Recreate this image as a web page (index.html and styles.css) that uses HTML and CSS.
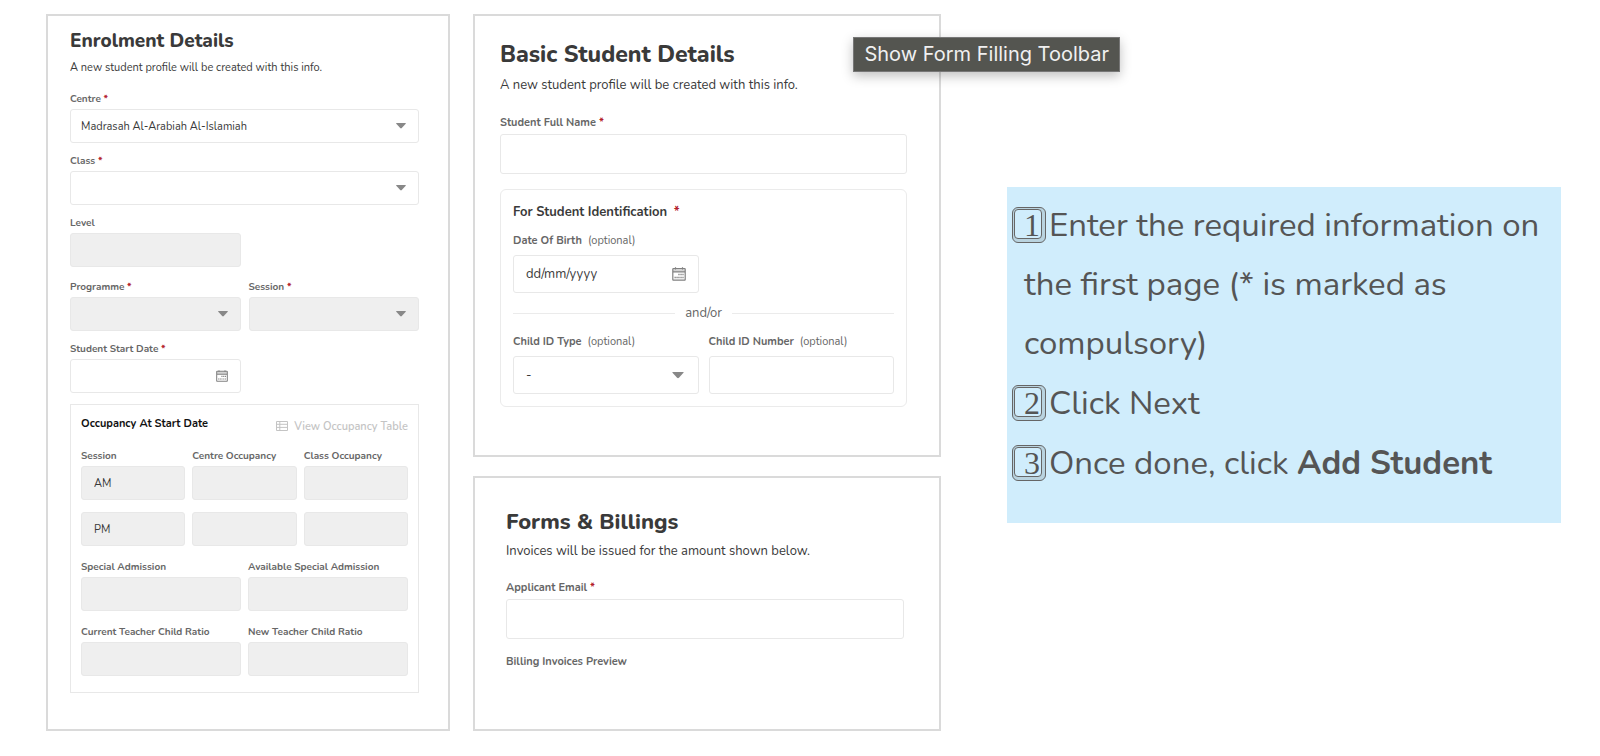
FILE: index.html
```html
<!DOCTYPE html>
<html lang="en">
<head>
  <meta charset="UTF-8" />
  <meta name="viewport" content="width=device-width, initial-scale=1.0"/>
  <title>Add Student</title>
  <link rel="stylesheet" href="styles.css">
</head>
<body>

<!-- shared icons -->
<svg class="sprite" aria-hidden="true">
  <symbol id="calendar" viewBox="0 0 14 14">
    <path d="M1 1.500h12v3.300H1z" fill="currentColor" opacity=".35"/>
    <path d="M1.500 1.500h11a.7.7 0 0 1 .7.7v10.400a.6.6 0 0 1-.6.6H1.400a.6.6 0 0 1-.6-.6V2.200a.7.7 0 0 1 .7-.7zM.8 4.900h12.400M3.500.2v2.200M10.500.2v2.200" fill="none" stroke="currentColor" stroke-width="1.200"/>
    <path d="M6.300 6.800h1.300v1.400H6.300zM8.400 6.800h1.300v1.400H8.400zM10.400 6.800h1.200v1.400h-1.200zM2.500 9.800h1.300v1.400H2.500zM4.400 9.800h1.300v1.400H4.400zM6.300 9.800h1.300v1.400H6.300zM8.400 9.800h1.300v1.400H8.400zM10.400 9.800h1.200v1.400h-1.200z" fill="currentColor"/>
  </symbol>
  <symbol id="table" viewBox="0 0 12 10">
    <path d="M.5.5h11v9H.5zM.5 3.300h11M.5 6.400h11M3.800.5v9" fill="none" stroke="currentColor"/>
  </symbol>
</svg>

<main class="page">
  <section class="card enrolment">
    <h2>Enrolment Details</h2>
    <p class="intro">A new student profile will be created with this info.</p>

    <div class="field">
      <label for="centre">Centre <span class="req">*</span></label>
      <select id="centre"><option>Madrasah Al-Arabiah Al-Islamiah</option></select>
    </div>
    <div class="field">
      <label for="class">Class <span class="req">*</span></label>
      <select id="class"><option></option></select>
    </div>
    <div class="row spaced">
      <div class="field">
        <label for="level">Level</label>
        <input type="text" id="level" disabled>
      </div>
    </div>
    <div class="row">
      <div class="field">
        <label for="programme">Programme <span class="req">*</span></label>
        <select id="programme" disabled><option></option></select>
      </div>
      <div class="field">
        <label for="session">Session <span class="req">*</span></label>
        <select id="session" disabled><option></option></select>
      </div>
    </div>
    <div class="row">
      <div class="field">
        <label for="startDate">Student Start Date <span class="req">*</span></label>
        <div class="date">
          <input type="text" id="startDate">
          <button type="button" aria-label="Pick a date"><svg><use href="#calendar"/></svg></button>
        </div>
      </div>
    </div>

    <div class="occupancy">
      <div class="occupancy-head">
        <h3>Occupancy At Start Date</h3>
        <button type="button" class="view-table" disabled><svg><use href="#table"/></svg>View Occupancy Table</button>
      </div>
      <div class="thirds">
        <div class="field">
          <label for="am">Session</label>
          <input type="text" id="am" value="AM" disabled>
        </div>
        <div class="field">
          <label for="amCentre">Centre Occupancy</label>
          <input type="text" id="amCentre" disabled>
        </div>
        <div class="field">
          <label for="amClass">Class Occupancy</label>
          <input type="text" id="amClass" disabled>
        </div>
        <input type="text" value="PM" aria-label="Session" disabled>
        <input type="text" aria-label="Centre Occupancy" disabled>
        <input type="text" aria-label="Class Occupancy" disabled>
      </div>
      <div class="halves">
        <div class="field">
          <label for="special">Special Admission</label>
          <input type="text" id="special" disabled>
        </div>
        <div class="field">
          <label for="available">Available Special Admission</label>
          <input type="text" id="available" disabled>
        </div>
        <div class="field">
          <label for="ratio">Current Teacher Child Ratio</label>
          <input type="text" id="ratio" disabled>
        </div>
        <div class="field">
          <label for="newRatio">New Teacher Child Ratio</label>
          <input type="text" id="newRatio" disabled>
        </div>
      </div>
    </div>
  </section>

  <div class="column">
    <section class="card student">
      <h2>Basic Student Details</h2>
      <p class="intro">A new student profile will be created with this info.</p>
      <div class="field">
        <label for="fullName">Student Full Name <span class="req">*</span></label>
        <input type="text" id="fullName">
      </div>

      <div class="identification">
        <h3>For Student Identification <span class="req">*</span></h3>
        <div class="row">
          <div class="field">
            <label for="dob">Date Of Birth <span class="optional">(optional)</span></label>
            <div class="date">
              <input type="text" id="dob" placeholder="dd/mm/yyyy">
              <button type="button" aria-label="Pick a date"><svg><use href="#calendar"/></svg></button>
            </div>
          </div>
        </div>
        <div class="divider">and/or</div>
        <div class="row">
          <div class="field">
            <label for="idType">Child ID Type <span class="optional">(optional)</span></label>
            <select id="idType"><option>-</option></select>
          </div>
          <div class="field">
            <label for="idNumber">Child ID Number <span class="optional">(optional)</span></label>
            <input type="text" id="idNumber">
          </div>
        </div>
      </div>
      <div class="tooltip" role="tooltip">Show Form Filling Toolbar</div>
    </section>

    <section class="card billing">
      <h2>Forms &amp; Billings</h2>
      <p class="intro">Invoices will be issued for the amount shown below.</p>
      <div class="field">
        <label for="email">Applicant Email <span class="req">*</span></label>
        <input type="email" id="email">
      </div>
      <p class="preview">Billing Invoices Preview</p>
    </section>
  </div>

  <aside class="steps">
    <p><span class="key"><span>1</span></span>Enter the required information on the first page (* is marked as compulsory)</p>
    <p><span class="key"><span>2</span></span>Click Next</p>
    <p><span class="key"><span>3</span></span>Once done, click <strong>Add Student</strong></p>
  </aside>
</main>

</body>
</html>
```
FILE: styles.css
```css
* {
  box-sizing: border-box;
}
body {
  margin: 0;
  background: #fff;
  color: #3a3a3a;
  font-family: Nunito, Lato, sans-serif;
}
h2, h3, p {
  margin: 0;
}
h2 {
  font-weight: 800;
}
.sprite {
  display: none;
}
.page {
  display: grid;
  grid-template-columns: 404fr 491fr 620fr;
  padding: 14px 39px 25px 46px;
}
.column {
  display: flex;
  flex-direction: column;
  gap: 19px;
  margin-left: 23px;
}
.card {
  border: 2px solid #dadada;
}

/* form controls */
.field {
  display: flex;
  flex-direction: column;
  gap: 3px;
  min-width: 0;
}
label {
  font-size: 10px;
  font-weight: 700;
  line-height: 14px;
  color: #666;
  white-space: nowrap;
}
.req {
  color: #b3202c;
}
.optional {
  margin-left: 3px;
  font-weight: 400;
}
input, select, .date {
  width: 100%;
  height: 34px;
  padding: 0 10px;
  border: 1px solid #e8e8e8;
  border-radius: 3px;
  background-color: #fff;
  color: #3a3a3a;
  font-family: inherit;
  font-size: 11px;
}
select {
  appearance: none;
  background-image: url("data:image/svg+xml,%3Csvg xmlns='http://www.w3.org/2000/svg' viewBox='0 0 10 6'%3E%3Cpath d='M.6 0h8.800q.8 0 .3.700L5.800 5Q5 5.800 4.200 5L.3.700Q-.2 0 .6 0z' fill='%23888'/%3E%3C/svg%3E");
  background-repeat: no-repeat;
  background-position: right 12px center;
  background-size: 10px 6px;
}
input:disabled, select:disabled {
  background-color: #efefef;
  opacity: 1;
}
.date {
  display: flex;
  align-items: center;
  padding: 0 12px;
}
.date input {
  flex: 1;
  min-width: 0;
  height: 100%;
  padding: 0;
  border: 0;
  background: none;
}
.date input::placeholder {
  color: #3a3a3a;
}
.date button {
  display: flex;
  padding: 0;
  border: 0;
  background: none;
  color: #808080;
}
.date svg {
  width: 12px;
  height: 12px;
}
.row, .halves {
  display: grid;
  grid-template-columns: 1fr 1fr;
  gap: 8px;
}

/* enrolment */
.enrolment {
  padding: 13px 29px 36px 22px;
}
.enrolment h2 {
  font-size: 19px;
  line-height: 24px;
}
.enrolment .intro {
  margin: 8px 0 17px;
  font-size: 11px;
  line-height: 14px;
}
.enrolment > .field, .enrolment > .row {
  margin-bottom: 11px;
}
.enrolment > .spaced {
  margin-bottom: 13px;
}
.occupancy {
  padding: 11px 10px 16px;
  border: 1px solid #e8e8e8;
}
.occupancy-head {
  display: flex;
  justify-content: space-between;
  margin-bottom: 13px;
}
.occupancy h3 {
  font-size: 11px;
  line-height: 15px;
  color: #111;
}
.view-table {
  display: flex;
  align-items: center;
  gap: 6px;
  height: 20px;
  padding: 0;
  border: 0;
  background: none;
  color: #c4c4c4;
  font-family: inherit;
  font-size: 11px;
  font-weight: 600;
}
.view-table svg {
  width: 12px;
  height: 10px;
}
.thirds {
  display: grid;
  grid-template-columns: 1fr 1fr 1fr;
  gap: 12px 7px;
  margin-bottom: 14px;
}
.thirds input {
  padding: 0 12px;
}
.halves {
  gap: 14px 7px;
}

/* basic student details */
.student {
  position: relative;
  padding: 25px 32px 48px 25px;
}
.student h2, .billing h2 {
  font-size: 23px;
  line-height: 28px;
}
.student .intro, .billing .intro {
  margin: 7px 0 22px;
  font-size: 13px;
  line-height: 18px;
}
.student label, .billing label {
  font-size: 11px;
}
.student .field, .billing .field {
  gap: 4px;
}
.student input, .student select, .student .date, .billing input {
  height: 40px;
  padding: 0 12px;
  font-size: 13px;
}
.identification {
  margin-top: 15px;
  padding: 14px 12px 12px;
  border: 1px solid #ebebeb;
  border-radius: 6px;
}
.identification h3 {
  margin-bottom: 13px;
  font-size: 13px;
  line-height: 17px;
}
.identification .req {
  margin-left: 3px;
}
.student .identification .field {
  gap: 7px;
}
.identification .row {
  gap: 10px;
}
.student .identification input, .student .identification select, .student .identification .date {
  height: 38px;
}
.student .identification select {
  background-position: right 14px center;
  background-size: 12px 7px;
}
.student .identification .date input {
  height: 100%;
  padding: 0;
}
.student .date svg {
  width: 14px;
  height: 14px;
}
.divider {
  display: flex;
  align-items: center;
  gap: 10px;
  margin: 12px 0 13px;
  font-size: 13px;
  line-height: 17px;
  color: #666;
}
.divider::before, .divider::after {
  content: "";
  flex: 1;
  border-top: 1px solid #ebebeb;
}
.tooltip {
  position: absolute;
  top: 21px;
  right: -181px;
  padding: 0 10px;
  border: 1px solid #777;
  background: #545550;
  box-shadow: 0 4px 12px rgba(0,0,0,0.25);
  color: #f0f0f0;
  font-family: Inter, sans-serif;
  font-size: 20px;
  line-height: 33px;
  white-space: nowrap;
}

/* forms & billings */
.billing {
  flex: 1;
  padding: 30px 35px 35px 31px;
}
.billing h2 {
  font-size: 22px;
}
.billing .intro {
  margin: 6px 0 21px;
}
.preview {
  margin-top: 16px;
  font-size: 11px;
  font-weight: 700;
  line-height: 14px;
  color: #666;
}

/* instructions */
.steps {
  align-self: start;
  margin: 173px 0 0 66px;
  padding: 9px 8px 30px 17px;
  background: #d0edfc;
  color: #555;
  font-size: 33px;
  line-height: 59px;
}
.steps p {
  text-indent: -12px;
}
.steps p + p {
  margin-top: 1px;
}
.key {
  display: inline-block;
  width: 34px;
  height: 36px;
  margin-right: 3px;
  padding: 1px 3px 3px 1px;
  border: 1px solid #666;
  border-radius: 6px;
  background: #b9d3df;
  text-indent: 0;
}
.key span {
  display: block;
  height: 30px;
  padding-right: 1px;
  border: 1px solid #666;
  border-radius: 4px;
  background: #d0edfc;
  font-family: "Liberation Serif", serif;
  font-size: 32px;
  line-height: 30px;
  text-align: right;
}
```
